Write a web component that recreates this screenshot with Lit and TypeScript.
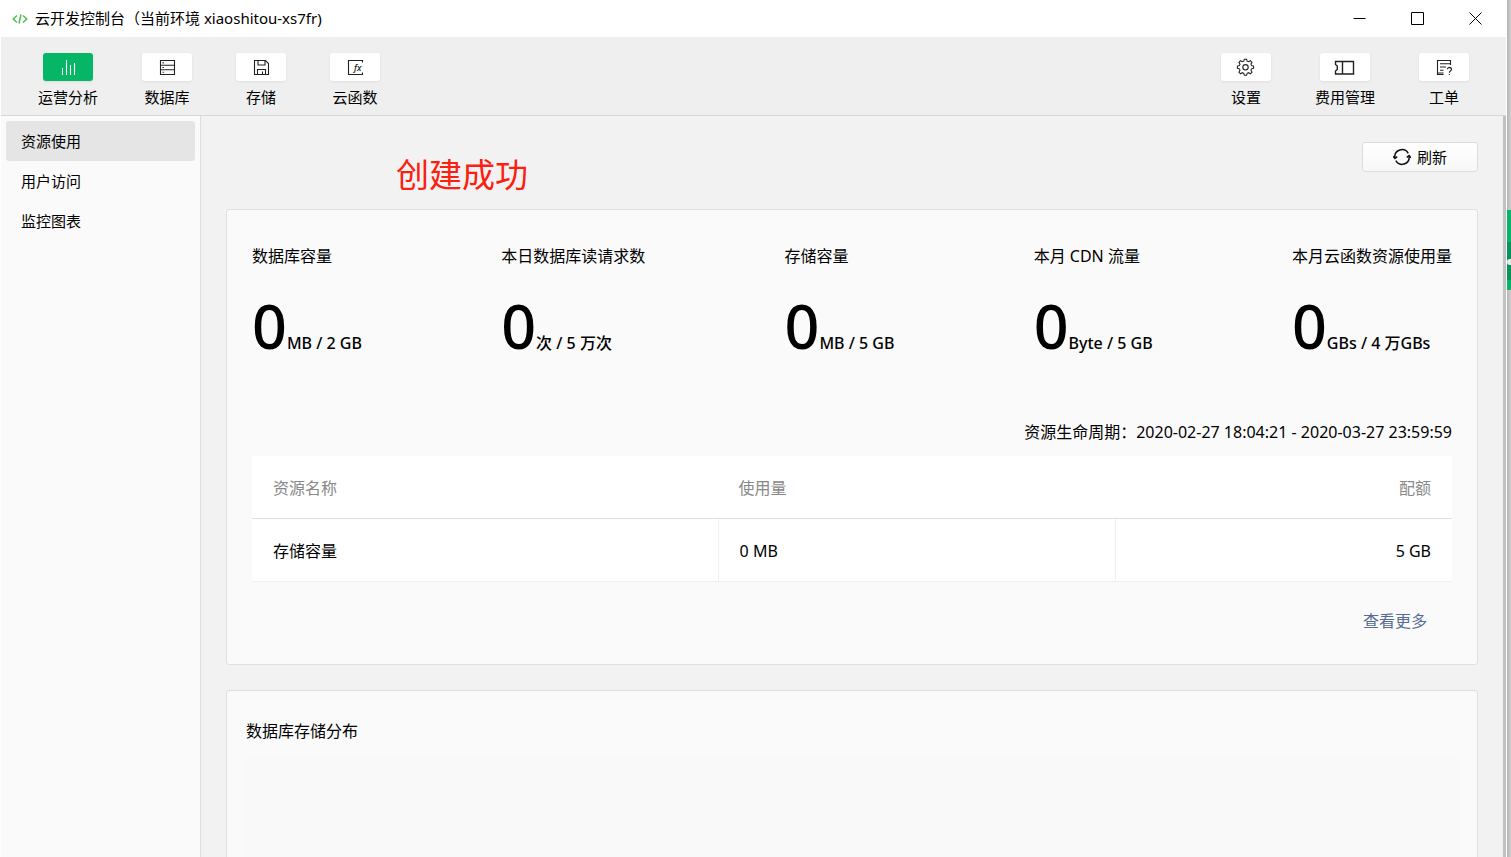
import { LitElement, html, css, svg } from "lit";
import { customElement, property, state } from "lit/decorators.js";

const icons: Record<string, unknown> = {
  chart: svg`<path d="M2.5 9v7M6.5 1v15M10.5 6v10M14.5 4v12"/>`,
  database: svg`<path d="M1.5 1.5h14v14h-14zM1.5 6.2h14M1.5 10.8h14"/><path d="M3.5 3.9h1.4M3.5 8.5h1.4M3.5 13.2h1.4"/>`,
  disk: svg`<path d="M1.5 1.5h11l3 3v11h-14zM5 1.5v4.500h7v-4.500M4.500 15.500v-5h8v5M9.500 15.500v-3"/>`,
  func: svg`<path d="M15.500 3.500v-2h-14v14h14v-2"/><text class="fx" x="7" y="12">fx</text>`,
  gear: svg`<path d="M7.3 1h2.400l.5 2.100 1.500.6 1.900-1.100 1.700 1.700-1.100 1.900.6 1.500 2.100.5v2.400l-2.100.5-.6 1.500 1.100 1.900-1.700 1.700-1.900-1.100-1.500.6-.5 2.100h-2.400l-.5-2.100-1.500-.6-1.900 1.100-1.700-1.700 1.100-1.900-.6-1.500-2.100-.5v-2.400l2.100-.5.6-1.500-1.100-1.900 1.700-1.700 1.900 1.100 1.500-.6z" transform="translate(.3 -.8) scale(.96)"/><circle cx="8.500" cy="8.300" r="2.700"/>`,
  ticket: svg`<path class="firm" d="M-.5 2.500h18v12.500h-18v-3l1.800-1.600v-3.300l-1.800-1.600zM6.500 2.500v12.500"/>`,
  order: svg`<path d="M14.500 6v-4.500h-13v14h6M4 4.800h10.500M4 8h6M4 11.200h3.500M1.500 14h6"/><path d="M11.300 10.300q.2-1.800 2.100-1.900 2.100.1 2.100 2-.2 1.100-1.400 1.800-.7.500-.7 1.500M13.400 14.900v1.200"/>`,
};

@customElement("tool-button")
class ToolButton extends LitElement {
  @property() icon = "";
  @property() label = "";
  @property({ type: Boolean }) active = false;

  static styles = css`
    :host { display: block; }
    .tool {
      display: flex; flex-direction: column; align-items: center; gap: 5px;
      padding: 0; border: 0; background: none; color: #000;
      font: inherit; font-size: 15px; line-height: 22px; white-space: nowrap;
    }
    .tile {
      display: flex; align-items: center; justify-content: center;
      width: 50px; height: 28px; border-radius: 3px; background: #fff; color: #222;
      box-shadow: 0 1px 3px rgba(0, 0, 0, 0.07);
    }
    .active { background: #07b567; color: #fff; }
    svg { width: 17px; height: 17px; overflow: visible; fill: none; stroke: currentColor; stroke-width: 1.1; }
    .firm { stroke-width: 1.4; }
    .fx { font: italic 500 9px "Noto Sans", sans-serif; fill: currentColor; stroke: none; }
  `;

  render() {
    return html`<button class="tool" type="button">
      <span class="tile ${this.active ? "active" : ""}">
        <svg viewBox="0 0 17 17" aria-hidden="true">${icons[this.icon]}</svg>
      </span>
      <span>${this.label}</span>
    </button>`;
  }
}

@customElement("app-root")
class AppRoot extends LitElement {
  @state() private section = "资源使用";

  private sections = ["资源使用", "用户访问", "监控图表"];
  private stats = [
    { name: "数据库容量", used: "0", quota: "MB / 2 GB" },
    { name: "本日数据库读请求数", used: "0", quota: "次 / 5 万次" },
    { name: "存储容量", used: "0", quota: "MB / 5 GB" },
    { name: "本月 CDN 流量", used: "0", quota: "Byte / 5 GB" },
    { name: "本月云函数资源使用量", used: "0", quota: "GBs / 4 万GBs" },
  ];

  static styles = css`
    :host {
      display: flex; height: 100vh; overflow: hidden; background: #cacaca; color: #000;
      font-family: "Noto Sans", "Noto Sans CJK SC", sans-serif; font-size: 16px; line-height: 24px; font-weight: 400;
    }
    * { box-sizing: border-box; }
    .window { flex: 1; min-width: 0; display: flex; flex-direction: column; background: #fff; padding: 0 1px; }
    .titlebar { display: flex; align-items: center; height: 37px; flex: none; padding: 0 2px 0 11px; }
    .logo { width: 16px; height: 12px; margin-right: 7px; fill: none; stroke: #4cc04c; stroke-width: 1.5; }
    .caption { margin: 0; padding-bottom: 2px; flex: 1; font-size: 15px; font-weight: inherit; white-space: nowrap; }
    .winbtn { display: flex; align-items: center; justify-content: center; width: 58px; height: 37px; padding: 0; border: 0; background: none; }
    .winbtn svg { width: 13px; height: 13px; fill: none; stroke: #000; stroke-width: 1; }
    .toolbar {
      display: flex; justify-content: space-between; flex: none; height: 79px;
      padding: 16px 37px 0; background: #efefef; border-bottom: 1px solid #d6d6d6;
    }
    .group { display: flex; gap: 44px; }
    .body { flex: 1; min-height: 0; display: flex; background: #f2f2f2; }
    .side { width: 200px; flex: none; padding: 5px; background: #fafafa; border-right: 1px solid #dedede; }
    .item {
      display: block; width: 100%; height: 40px; padding: 0 15px; border: 0; border-radius: 3px;
      background: none; color: #000; font: inherit; font-size: 15px; text-align: left;
    }
    .item.on { background: #e5e5e5; }
    .main { flex: 1; min-width: 0; overflow: hidden; padding: 26px 25px 0; border-right: 3px solid #c1c1c1; }
    .head { display: flex; justify-content: space-between; align-items: flex-start; height: 67px; }
    .notice { margin: 9px 0 0 170px; color: #fb2010; font-size: 33px; line-height: 48px; }
    .refresh {
      display: flex; align-items: center; justify-content: center; gap: 6px; width: 116px; height: 30px; padding: 0 0 1px;
      border: 1px solid #dcdcdc; border-radius: 3px; background: linear-gradient(#fff, #f7f7f7);
      color: #000; font: inherit; font-size: 15px;
    }
    .refresh svg { width: 18px; height: 18px; fill: none; stroke: #111; stroke-width: 1.5; }
    .card { background: #fafafa; border: 1px solid #dfdfdf; border-radius: 3px; margin-bottom: 25px; }
    .usage { padding: 34px 25px 31px; }
    .stats { display: flex; justify-content: space-between; margin: 0; white-space: nowrap; }
    .stats dd { margin: 26px 0 0; font-weight: 500; line-height: 64px; }
    .num { font-size: 61px; }
    .period { margin: 45px 0 12px; text-align: right; }
    .table { width: 100%; table-layout: fixed; border-collapse: separate; border-spacing: 0; background: #fff; border-radius: 3px; }
    .table th, .table td { padding: 2px 21px 0; text-align: left; font-weight: inherit; }
    .table th { height: 63px; color: #888; border-bottom: 1px solid #e2e2e2; }
    .table td { height: 63px; border-bottom: 1px solid #f0f0f0; }
    .table td + td { border-left: 1px solid #f0f0f0; }
    .table .end { text-align: right; }
    .c1 { width: 38.8%; }
    .c2 { width: 33.1%; }
    .more { margin: 27px 25px 0; text-align: right; color: #576b95; }
    .more a { color: inherit; text-decoration: none; }
    .dist { padding: 28px 19px 0; }
    .dist h2 { margin: 0 0 12px; font-size: 16px; font-weight: inherit; }
    .plot { height: 300px; background: #f9f9f9; }
    .behind { width: 4px; flex: none; background: linear-gradient(90deg, #b4b4b4, #d0d0d0); }
    .tab { margin-top: 210px; height: 80px; background: linear-gradient(#07b567 40%, #069458 40% 88%, #07b567 88%); display: flex; align-items: center; }
    .tab-dot { width: 4px; height: 6px; border-radius: 3px 0 0 3px; background: #e8e8e8; margin-top: 24px; }
  `;

  render() {
    return html`
      <div class="window">
        <header class="titlebar">
          <svg class="logo" viewBox="0 0 16 12" aria-hidden="true"><path d="M5 2.500 1.200 6 5 9.500M11 2.500 14.800 6 11 9.500M9 1.500 7 10.500"/></svg>
          <h1 class="caption">云开发控制台（当前环境 xiaoshitou-xs7fr)</h1>
          <button class="winbtn" aria-label="最小化"><svg viewBox="0 0 13 13"><path d="M.5 6.500h12"/></svg></button>
          <button class="winbtn" aria-label="最大化"><svg viewBox="0 0 13 13"><path d="M.5 .5h12v12H.5z"/></svg></button>
          <button class="winbtn" aria-label="关闭"><svg viewBox="0 0 13 13"><path d="M.5 .5l12 12M12.500 .5l-12 12"/></svg></button>
        </header>
        <nav class="toolbar">
          <div class="group">
            <tool-button icon="chart" label="运营分析" active></tool-button>
            <tool-button icon="database" label="数据库"></tool-button>
            <tool-button icon="disk" label="存储"></tool-button>
            <tool-button icon="func" label="云函数"></tool-button>
          </div>
          <div class="group">
            <tool-button icon="gear" label="设置"></tool-button>
            <tool-button icon="ticket" label="费用管理"></tool-button>
            <tool-button icon="order" label="工单"></tool-button>
          </div>
        </nav>
        <div class="body">
          <nav class="side">
            ${this.sections.map((s) => html`<button class="item ${s === this.section ? "on" : ""}" @click=${() => (this.section = s)}>${s}</button>`)}
          </nav>
          <main class="main">
            <div class="head">
              <p class="notice">创建成功</p>
              <button class="refresh" type="button">
                <svg viewBox="0 0 18 18" aria-hidden="true"><path d="M1.800 9.500A7.200 7.200 0 0 1 15.200 5.300M16.200 8.500A7.200 7.200 0 0 1 2.800 12.700"/><path d="M0 8.200 1.900 10.400 4.200 8.600M18 9.800 16.100 7.600 13.800 9.400"/></svg>
                刷新
              </button>
            </div>
            <section class="card usage">
              <dl class="stats">
                ${this.stats.map((s) => html`<div><dt>${s.name}</dt><dd><span class="num">${s.used}</span>${s.quota}</dd></div>`)}
              </dl>
              <p class="period">资源生命周期：2020-02-27 18:04:21 - 2020-03-27 23:59:59</p>
              <table class="table">
                <thead><tr><th class="c1">资源名称</th><th class="c2">使用量</th><th class="end">配额</th></tr></thead>
                <tbody><tr><td>存储容量</td><td>0 MB</td><td class="end">5 GB</td></tr></tbody>
              </table>
              <div class="more"><a href="#more">查看更多</a></div>
            </section>
            <section class="card dist">
              <h2>数据库存储分布</h2>
              <div class="plot"></div>
            </section>
          </main>
        </div>
      </div>
      <div class="behind"><div class="tab"><span class="tab-dot"></span></div></div>
    `;
  }
}
